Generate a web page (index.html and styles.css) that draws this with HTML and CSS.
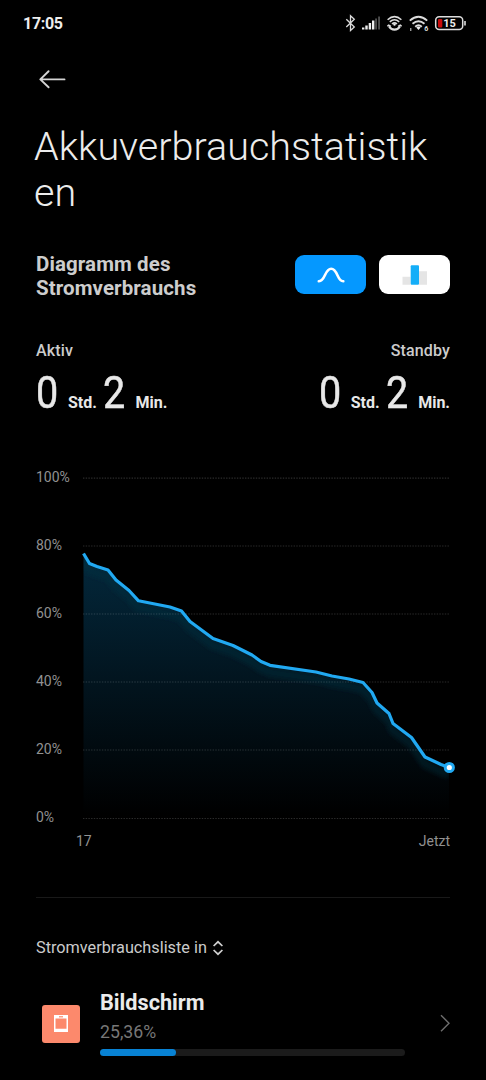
FILE: index.html
```html
<!DOCTYPE html>
<html lang="de">
<head>
<meta charset="utf-8">
<title>Akkuverbrauchstatistiken</title>
<link rel="stylesheet" href="styles.css">
</head>
<body>
<div class="screen">
  <header class="status">
    <span class="time">17:05</span>
    <svg class="status-icons" width="126" height="24" viewBox="342 11 126 24" fill="none" stroke="#dcdcdc">
      <path d="M346.300 19.300 354.300 27 350.500 30.500V15.800L354.300 19.300 346.300 27" stroke-width="1.300"/>
      <g stroke="none">
        <path fill="#eee" d="M362 27.500h2.400V29.500h-2.400zM365.300 25.500h2.400v4h-2.400zM368.700 23h2.400v6.500h-2.400zM372 20.500h2.400v9h-2.400z"/>
        <path fill="#555" d="M375.200 18.500h1.700v11h-1.700zM378.200 16.500h1.700v13h-1.700z"/>
      </g>
      <g stroke-width="1.500">
        <path d="M387.600 19.800Q394.500 13.400 401.400 19.800M389.800 21.900Q394.500 17.600 399.200 21.900M392 24Q394.500 21.700 397 24"/>
        <path d="M389 26.200Q391 29.700 394.500 29.700T400 26.200" stroke-width="2.300"/>
        <path d="M387.300 26.200 388.700 25 391 26.300M401.700 26.200 400.300 25 398 26.300" stroke-width="1.300"/>
      </g>
      <circle cx="394.500" cy="24.600" r="1.200" fill="#eee" stroke="none"/>
      <g stroke-width="1.900">
        <path d="M409.800 20.600Q418.500 13 427.200 20.600M412.500 23.700Q418.500 18.700 424.500 23.700M415.200 26.700Q418.500 24 421.800 26.700"/>
      </g>
      <path d="m416.300 27.500 2.200 2.500 2.200-2.500Q418.500 25.500 416.300 27.500z" fill="#eee" stroke="none"/>
      <path d="M410.800 28v3" stroke-width="1"/>
      <text class="wifi-gen" x="424.300" y="31">6</text>
      <rect x="435.700" y="16.800" width="27" height="12.800" rx="3.500" stroke-width="1.500" stroke="#ddd"/>
      <path d="M465 21v4.500" stroke-width="1.600"/>
      <rect x="438" y="19" width="4.300" height="8.500" rx="1" fill="#c80a0a" stroke="none"/>
      <text class="charge" x="443.300" y="27">15</text>
    </svg>
  </header>

  <nav class="toolbar">
    <svg width="28" height="20" viewBox="38 69 28 20" fill="none" stroke="#d4d4d4" stroke-width="1.900" stroke-linecap="round" stroke-linejoin="round"><path d="M64.500 79.400H40.500M48.600 71.200 40.300 79.400 48.600 87.300"/></svg>
  </nav>

  <h1 class="title">Akkuverbrauchstatistik<br>en</h1>

  <section class="heading">
    <h2 class="heading-text">Diagramm des<br>Stromverbrauchs</h2>
    <div class="toggle">
      <div class="toggle-btn active">
        <svg width="30" height="20" viewBox="315.500 264.500 30 20" fill="none" stroke="#fff" stroke-width="2.600" stroke-linecap="round"><path d="M318.300 280.700C325 281 324 268.300 330.700 268.300S336.500 281 342.800 280.700"/></svg>
      </div>
      <div class="toggle-btn">
        <svg width="28" height="20" viewBox="401 264.800 28 20"><path fill="#e5e5e5" d="M402.500 276.500h8v8h-8zM419 271h8v13.500h-8z"/><rect x="410.700" y="265" width="8.300" height="19.500" rx="1" fill="#14aef8"/></svg>
      </div>
    </div>
  </section>

  <section class="stats">
    <div class="stat">
      <div class="stat-label">Aktiv</div>
      <div class="stat-value"><b class="num">0</b><span class="unit">Std.</span><b class="num second">2</b><span class="unit">Min.</span></div>
    </div>
    <div class="stat">
      <div class="stat-label end">Standby</div>
      <div class="stat-value"><b class="num">0</b><span class="unit">Std.</span><b class="num second">2</b><span class="unit">Min.</span></div>
    </div>
  </section>

  <section class="chart">
    <div class="y-axis"><span>100%</span><span>80%</span><span>60%</span><span>40%</span><span>20%</span><span>0%</span></div>
    <div class="plot">
      <svg class="plot-svg" width="373" height="350" viewBox="83 472 373 350" fill="none">
        <defs>
          <linearGradient id="area" gradientUnits="userSpaceOnUse" x1="0" y1="554" x2="0" y2="815">
            <stop offset="0" stop-color="#03283c"/><stop offset=".5" stop-color="#02141e"/><stop offset="1" stop-color="#000"/>
          </linearGradient>
          <filter id="soft" x="-10%" y="-10%" width="120%" height="130%"><feGaussianBlur stdDeviation="2"/></filter>
          <clipPath id="under"><path d="M83.500 554 89.500 563.500 97 566.500 108 570 116 580 129 590.500 138.500 600.800 170 607 181.500 611 190 621.500 213 638.500 233 645.500 252 655 261 661.500 270 665.300 316 672 332 676 349 679 363 682.500 372 692.500 377 703 389 713.500 393 723.500 411.500 737.500 425 757 441 764.500 449 767.500V819H83.500z"/></clipPath>
        </defs>
        <g clip-path="url(#under)">
          <rect x="83" y="550" width="367" height="270" fill="url(#area)"/>
          <path transform="translate(0 7)" filter="url(#soft)" stroke="#0b3442" stroke-opacity=".36" stroke-width="9" d="M83.500 554 89.500 563.500 97 566.500 108 570 116 580 129 590.500 138.500 600.800 170 607 181.500 611 190 621.500 213 638.500 233 645.500 252 655 261 661.500 270 665.300 316 672 332 676 349 679 363 682.500 372 692.500 377 703 389 713.500 393 723.500 411.500 737.500 425 757 441 764.500 449 767.500"/>
        </g>
        <path stroke="#fff" stroke-opacity=".17" stroke-width="1.200" stroke-dasharray="1.400 1.300" d="M83 478.200H450M83 546H450M83 614H450M83 682H450M83 750H450M83 818.500H450"/>
        <path stroke="#21a9f2" stroke-width="3.200" stroke-linejoin="round" d="M83.500 553.500 89.500 563.500 97 566.500 108 570 116 580 129 590.500 138.500 600.800 170 607 181.500 611 190 621.500 213 638.500 233 645.500 252 655 261 661.500 270 665.300 316 672 332 676 349 679 363 682.500 372 692.500 377 703 389 713.500 393 723.500 411.500 737.500 425 757 441 764.500 449 767.500"/>
        <circle cx="449.300" cy="767.500" r="4.100" fill="#fff" stroke="#21a9f2" stroke-width="3"/>
      </svg>
      <div class="x-axis"><span class="x-start">17</span><span>Jetzt</span></div>
    </div>
  </section>

  <section class="list">
    <div class="list-head">
      <span>Stromverbrauchsliste in</span>
      <svg width="12" height="16" viewBox="0 0 12 16" fill="none" stroke="#d0d0d0" stroke-width="1.700"><path d="M1.600 6 6 1.800 10.400 6M1.600 10 6 14.200 10.400 10"/></svg>
    </div>
    <div class="item">
      <div class="app-icon">
        <svg width="16" height="18" viewBox="0 0 16 18"><path fill="#fff" fill-rule="evenodd" d="M1 0h14v17H1zM2.500 3.500v10.300h11V3.500z"/><path d="M6 1.800h4" stroke="#fc896c" stroke-width="1.200"/></svg>
      </div>
      <div class="item-body">
        <div class="item-name">Bildschirm</div>
        <div class="item-percent">25,36%</div>
        <div class="bar"><div class="bar-fill" style="width:25%"></div></div>
      </div>
      <svg class="chevron" width="12" height="20" viewBox="0 0 12 20" fill="none" stroke="#6e6e6e" stroke-width="1.400"><path d="M2 2.200 10 10.200 2 18.200"/></svg>
    </div>
  </section>
</div>
</body>
</html>
```
FILE: styles.css
```css
* { box-sizing: border-box; }
body { margin: 0; background: #000; font-family: Roboto, sans-serif; color: #e6e6e6; }
.screen { width: 486px; height: 1080px; overflow: hidden; background: #000; }
svg { display: block; flex: none; }

.status { height: 46px; padding: 0 18px 0 23px; display: flex; align-items: center; justify-content: space-between; }
.time { font-size: 16px; font-weight: 700; letter-spacing: -0.3px; color: #eee; }
.wifi-gen { font-size: 7px; font-weight: 700; fill: #ddd; stroke: none; }
.charge { font-size: 11px; font-weight: 700; fill: #eee; stroke: none; }

.toolbar { height: 77px; padding: 23px 38px 0; }
.title { margin: 0; height: 129px; padding: 1px 0 0 34px; font-size: 39.500px; line-height: 46px; font-weight: 300; color: #ececec; white-space: nowrap; }

.heading { height: 89px; padding: 0 36px; display: flex; justify-content: space-between; align-items: flex-start; }
.heading-text { margin: 0; font-size: 20.500px; line-height: 24px; font-weight: 700; letter-spacing: 0.100px; color: #cdcdcd; }
.toggle { display: flex; gap: 13px; padding-top: 3px; }
.toggle-btn { width: 71px; height: 39px; border-radius: 9px; background: #fff; display: flex; align-items: center; justify-content: center; }
.toggle-btn.active { background: #0598ff; }

.stats { height: 131px; padding: 0 36px; display: flex; justify-content: space-between; }
.stat-label { font-size: 16px; line-height: 20px; font-weight: 500; letter-spacing: 0.150px; color: #ccc; }
.stat-label.end { text-align: right; }
.stat-value { display: flex; align-items: baseline; line-height: 60px; height: 60px; padding-top: 2px; }
.num { font-size: 45px; font-weight: 400; -webkit-text-stroke: 0.5px #e8e8e8; color: #e8e8e8; width: 24px; transform: scaleX(0.880); transform-origin: left; }
.num.second { margin-left: 6px; }
.unit { font-size: 16px; font-weight: 700; color: #e8e8e8; margin-left: 8px; }
.num.second + .unit { margin-left: 8.500px; }

.chart { display: flex; height: 425px; padding-left: 36px; }
.y-axis { width: 47px; display: flex; flex-direction: column; gap: 48px; font-size: 14px; line-height: 20px; color: #919191; margin-top: -5px; }
.plot-svg { overflow: visible; }
.plot { width: 367px; }
.x-axis { display: flex; justify-content: space-between; margin-top: 9px; font-size: 14px; line-height: 20px; color: #919191; }
.x-start { margin-left: -7px; }

.list { margin: 0 36px; border-top: 1px solid #191919; }
.list-head { display: flex; align-items: center; gap: 5px; height: 20px; margin-top: 40px; font-size: 16.250px; line-height: 20px; color: #cbcbcb; }
.item { display: flex; margin-top: 32px; padding-left: 6px; }
.app-icon { flex: none; width: 38px; height: 38px; margin: 15px 20px 0 0; border-radius: 3px; background: #fc896c; display: flex; align-items: center; justify-content: center; }
.item-body { flex: none; width: 305px; }
.item-name { font-size: 21.700px; line-height: 26px; font-weight: 700; color: #ebebeb; }
.item-percent { margin-top: 4px; font-size: 17.700px; line-height: 24px; color: #777; }
.bar { height: 7px; margin-top: 5px; border-radius: 4px; background: #1b1b1b; }
.bar-fill { height: 7px; border-radius: 4px; background: #0882d4; }
.chevron { margin: 23px 0 0 34px; }
```
